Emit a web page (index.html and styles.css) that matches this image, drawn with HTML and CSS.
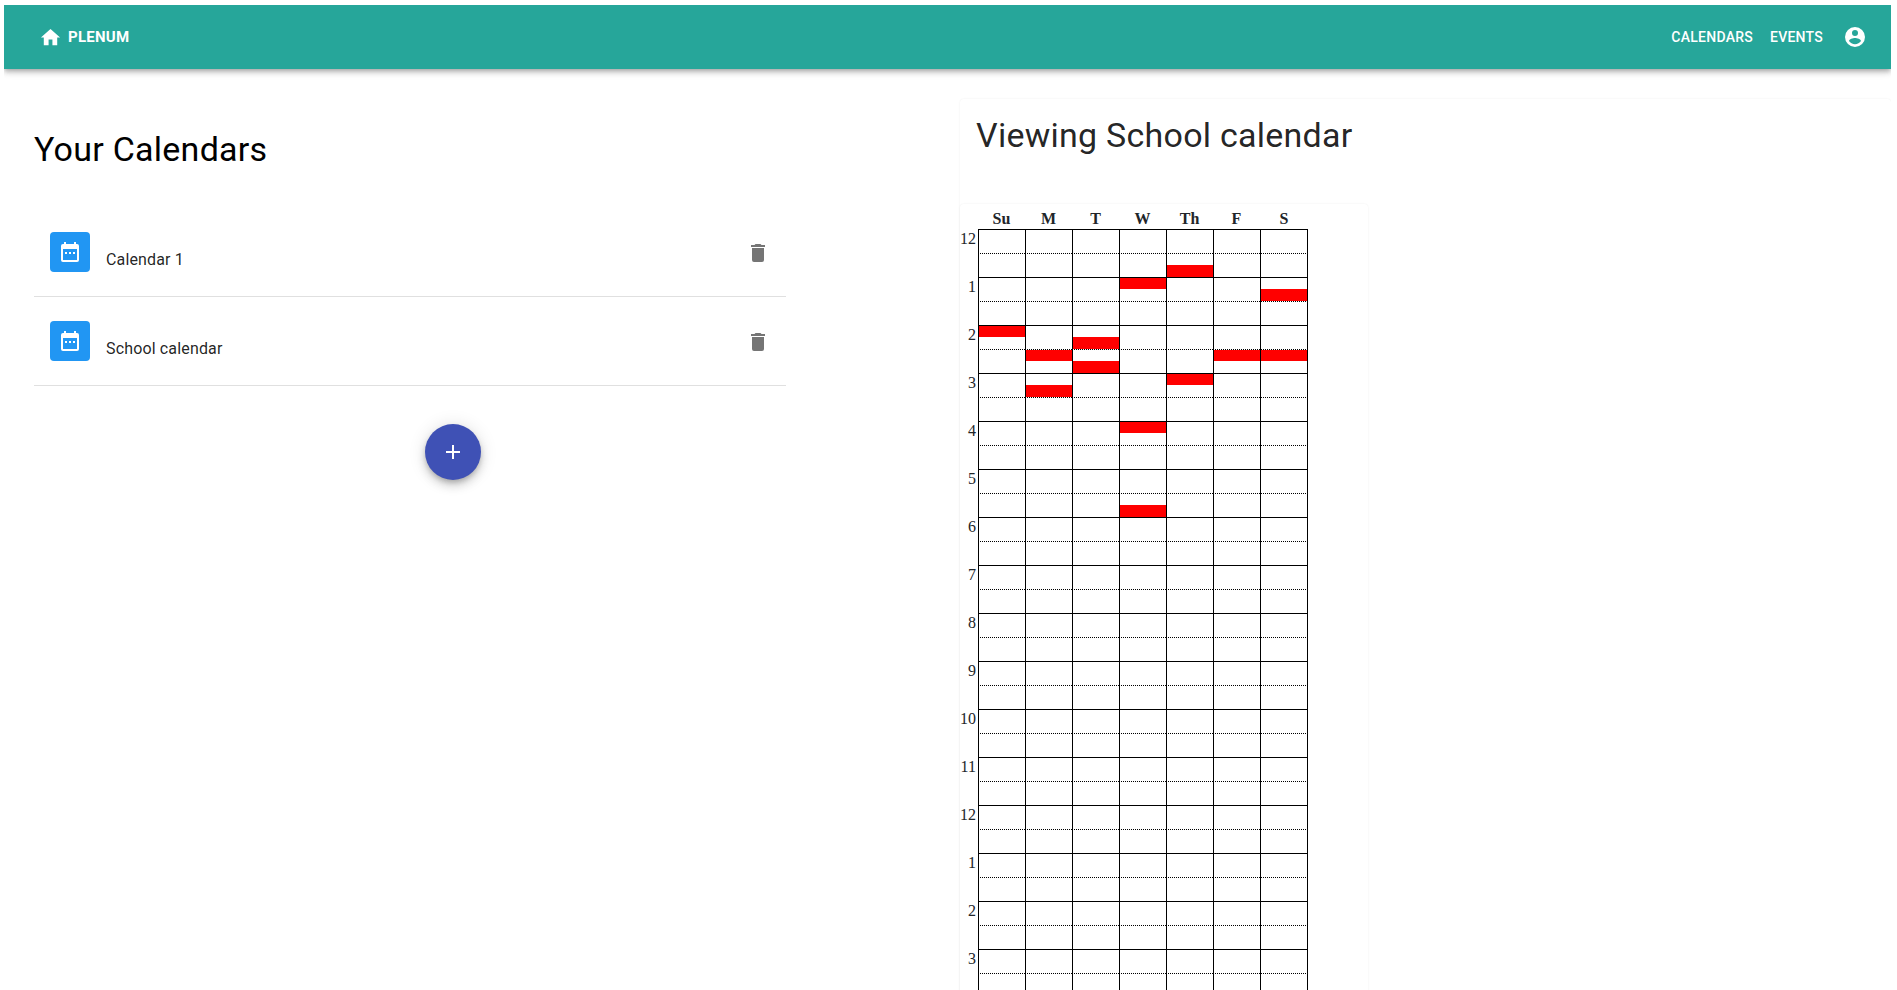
FILE: index.html
```html
<!DOCTYPE html>
<html lang="en">
<head>
    <meta charset="UTF-8">
    <meta name="viewport" content="width=device-width, initial-scale=1.0">
    <title>Plenum</title>
    <link rel="stylesheet" href="styles.css">
</head>
<body>
    <header class="navbar">
        <a class="brand" href="#">
            <svg class="icon" viewBox="0 0 24 24"><path d="M10,20V14H14V20H19V12H22L12,3L2,12H5V20H10Z"/></svg>
            <span>Plenum</span>
        </a>
        <nav class="nav-links">
            <a href="#">Calendars</a>
            <a href="#">Events</a>
            <svg class="icon account" viewBox="0 0 24 24"><path d="M12,19.2C9.5,19.2 7.29,17.92 6,16C6.03,14 10,12.9 12,12.9C14,12.9 17.97,14 18,16C16.71,17.92 14.5,19.2 12,19.2M12,5A3,3 0 0,1 15,8A3,3 0 0,1 12,11A3,3 0 0,1 9,8A3,3 0 0,1 12,5M12,2A10,10 0 0,0 2,12A10,10 0 0,0 12,22A10,10 0 0,0 22,12A10,10 0 0,0 12,2Z"/></svg>
        </nav>
    </header>

    <main class="content">
        <section class="calendars">
            <h1>Your Calendars</h1>
            <ul class="calendar-list">
                <li>
                    <span class="avatar">
                        <svg class="icon" viewBox="0 0 24 24"><path d="M19,4H18V2H16V4H8V2H6V4H5A2,2 0 0,0 3,6V20A2,2 0 0,0 5,22H19A2,2 0 0,0 21,20V6A2,2 0 0,0 19,4M19,20H5V9H19V20M7,12H9V14H7V12M11,12H13V14H11V12M15,12H17V14H15V12Z"/></svg>
                    </span>
                    <span class="calendar-name">Calendar 1</span>
                    <svg class="icon trash" viewBox="0 0 24 24"><path d="M19,4H15.5L14.5,3H9.5L8.5,4H5V6H19V4M6,19A2,2 0 0,0 8,21H16A2,2 0 0,0 18,19V7H6V19Z"/></svg>
                </li>
                <li>
                    <span class="avatar">
                        <svg class="icon" viewBox="0 0 24 24"><path d="M19,4H18V2H16V4H8V2H6V4H5A2,2 0 0,0 3,6V20A2,2 0 0,0 5,22H19A2,2 0 0,0 21,20V6A2,2 0 0,0 19,4M19,20H5V9H19V20M7,12H9V14H7V12M11,12H13V14H11V12M15,12H17V14H15V12Z"/></svg>
                    </span>
                    <span class="calendar-name">School calendar</span>
                    <svg class="icon trash" viewBox="0 0 24 24"><path d="M19,4H15.5L14.5,3H9.5L8.5,4H5V6H19V4M6,19A2,2 0 0,0 8,21H16A2,2 0 0,0 18,19V7H6V19Z"/></svg>
                </li>
            </ul>
            <button class="fab" type="button">
                <svg class="icon" viewBox="0 0 24 24"><path d="M19,13H13V19H11V13H5V11H11V5H13V11H19V13Z"/></svg>
            </button>
        </section>

        <section class="viewer">
            <h2>Viewing School calendar</h2>
            <div class="schedule-card">
                <table class="schedule">
                    <thead>
                        <tr><th class="hour"></th><th>Su</th><th>M</th><th>T</th><th>W</th><th>Th</th><th>F</th><th>S</th></tr>
                    </thead>
                    <tbody>
                        <tr><th class="hour" rowspan="2">12</th><td></td><td></td><td></td><td></td><td></td><td></td><td></td></tr>
                        <tr class="half"><td></td><td></td><td></td><td></td><td><div class="busy-late"></div></td><td></td><td></td></tr>
                        <tr><th class="hour" rowspan="2">1</th><td></td><td></td><td></td><td><div class="busy-early"></div></td><td></td><td></td><td><div class="busy-late"></div></td></tr>
                        <tr class="half"><td></td><td></td><td></td><td></td><td></td><td></td><td></td></tr>
                        <tr><th class="hour" rowspan="2">2</th><td><div class="busy-early"></div></td><td></td><td><div class="busy-late"></div></td><td></td><td></td><td></td><td></td></tr>
                        <tr class="half"><td></td><td><div class="busy-early"></div></td><td><div class="busy-late"></div></td><td></td><td></td><td><div class="busy-early"></div></td><td><div class="busy-early"></div></td></tr>
                        <tr><th class="hour" rowspan="2">3</th><td></td><td><div class="busy-late"></div></td><td></td><td></td><td><div class="busy-early"></div></td><td></td><td></td></tr>
                        <tr class="half"><td></td><td></td><td></td><td></td><td></td><td></td><td></td></tr>
                        <tr><th class="hour" rowspan="2">4</th><td></td><td></td><td></td><td><div class="busy-early"></div></td><td></td><td></td><td></td></tr>
                        <tr class="half"><td></td><td></td><td></td><td></td><td></td><td></td><td></td></tr>
                        <tr><th class="hour" rowspan="2">5</th><td></td><td></td><td></td><td></td><td></td><td></td><td></td></tr>
                        <tr class="half"><td></td><td></td><td></td><td><div class="busy-late"></div></td><td></td><td></td><td></td></tr>
                        <tr><th class="hour" rowspan="2">6</th><td></td><td></td><td></td><td></td><td></td><td></td><td></td></tr>
                        <tr class="half"><td></td><td></td><td></td><td></td><td></td><td></td><td></td></tr>
                        <tr><th class="hour" rowspan="2">7</th><td></td><td></td><td></td><td></td><td></td><td></td><td></td></tr>
                        <tr class="half"><td></td><td></td><td></td><td></td><td></td><td></td><td></td></tr>
                        <tr><th class="hour" rowspan="2">8</th><td></td><td></td><td></td><td></td><td></td><td></td><td></td></tr>
                        <tr class="half"><td></td><td></td><td></td><td></td><td></td><td></td><td></td></tr>
                        <tr><th class="hour" rowspan="2">9</th><td></td><td></td><td></td><td></td><td></td><td></td><td></td></tr>
                        <tr class="half"><td></td><td></td><td></td><td></td><td></td><td></td><td></td></tr>
                        <tr><th class="hour" rowspan="2">10</th><td></td><td></td><td></td><td></td><td></td><td></td><td></td></tr>
                        <tr class="half"><td></td><td></td><td></td><td></td><td></td><td></td><td></td></tr>
                        <tr><th class="hour" rowspan="2">11</th><td></td><td></td><td></td><td></td><td></td><td></td><td></td></tr>
                        <tr class="half"><td></td><td></td><td></td><td></td><td></td><td></td><td></td></tr>
                        <tr><th class="hour" rowspan="2">12</th><td></td><td></td><td></td><td></td><td></td><td></td><td></td></tr>
                        <tr class="half"><td></td><td></td><td></td><td></td><td></td><td></td><td></td></tr>
                        <tr><th class="hour" rowspan="2">1</th><td></td><td></td><td></td><td></td><td></td><td></td><td></td></tr>
                        <tr class="half"><td></td><td></td><td></td><td></td><td></td><td></td><td></td></tr>
                        <tr><th class="hour" rowspan="2">2</th><td></td><td></td><td></td><td></td><td></td><td></td><td></td></tr>
                        <tr class="half"><td></td><td></td><td></td><td></td><td></td><td></td><td></td></tr>
                        <tr><th class="hour" rowspan="2">3</th><td></td><td></td><td></td><td></td><td></td><td></td><td></td></tr>
                        <tr class="half"><td></td><td></td><td></td><td></td><td></td><td></td><td></td></tr>
                    </tbody>
                </table>
            </div>
        </section>
    </main>
</body>
</html>
```

FILE: styles.css
```css
html {
    overflow: hidden;
}
body {
    font-family: 'Roboto', sans-serif;
    background-color: white;
    color: rgba(0, 0, 0, 0.87);
    margin: 5px 6px 0 4px;
}
.icon {
    display: block;
    width: 24px;
    height: 24px;
    fill: currentColor;
}

/* Верхняя панель */
.navbar {
    display: flex;
    justify-content: space-between;
    align-items: center;
    height: 64px;
    padding: 0 24px 0 35px;
    background-color: #26a69a;
    color: white;
    box-shadow: 0 2px 4px -1px rgba(0, 0, 0, 0.2), 0 4px 5px 0 rgba(0, 0, 0, 0.14), 0 1px 10px 0 rgba(0, 0, 0, 0.12);
}
.navbar a {
    color: white;
    text-decoration: none;
    text-transform: uppercase;
    font-size: 14px;
    font-weight: 500;
    letter-spacing: 0.25px;
}
.brand {
    display: flex;
    align-items: center;
    gap: 6px;
}
.brand .icon {
    width: 23px;
    height: 23px;
}
.brand span {
    font-size: 15px;
    font-weight: 700;
}
.nav-links {
    display: flex;
    align-items: center;
    gap: 17px;
}
.account {
    margin-left: 3px;
}

.content {
    display: flex;
    align-items: flex-start;
}

/* Левая колонка */
.calendars {
    width: 926px;
    padding-left: 30px;
    flex-shrink: 0;
}
h1 {
    margin: 0;
    padding-top: 58px;
    font-size: 34px;
    font-weight: 400;
    letter-spacing: 0.25px;
    line-height: 44px;
    color: black;
}
.calendar-list {
    list-style: none;
    width: 752px;
    margin: 0;
    padding: 37px 0 0;
}
.calendar-list li {
    display: flex;
    align-items: flex-start;
    height: 64px;
    padding: 24px 16px 0;
    border-bottom: 1px solid rgba(0, 0, 0, 0.12);
}
.avatar {
    display: flex;
    align-items: center;
    justify-content: center;
    width: 40px;
    height: 40px;
    border-radius: 4px;
    background-color: #2196f3;
    color: white;
}
.calendar-name {
    flex: 1;
    margin-left: 16px;
    margin-top: 17px;
    font-size: 16px;
    letter-spacing: 0.15px;
    line-height: 22px;
}
.trash {
    margin-top: 9px;
    color: #757575;
}
.fab {
    display: flex;
    align-items: center;
    justify-content: center;
    width: 56px;
    height: 56px;
    margin: 38px 0 0 391px;
    padding: 0;
    border: none;
    border-radius: 50%;
    background-color: #3f51b5;
    color: white;
    box-shadow: 0 3px 5px -1px rgba(0, 0, 0, 0.2), 0 6px 10px 0 rgba(0, 0, 0, 0.14), 0 1px 18px 0 rgba(0, 0, 0, 0.12);
}

/* Правая колонка */
.viewer {
    flex: 1;
    margin-top: 30px;
    border-radius: 4px;
    box-shadow: 0 0 2px rgba(0, 0, 0, 0.08);
}
h2 {
    margin: 0;
    padding: 14px 16px 0;
    height: 91px;
    font-size: 34px;
    font-weight: 400;
    letter-spacing: 0.25px;
    line-height: 44px;
}
.schedule-card {
    width: 408px;
    border-radius: 4px;
    box-shadow: 0 0 2px rgba(0, 0, 0, 0.08);
}
.schedule {
    border-collapse: separate;
    border-spacing: 0;
    font-family: 'Liberation Serif', serif;
    font-size: 16px;
    color: #212529;
}
.schedule thead th {
    width: 47px;
    height: 24px;
    padding: 0 0 1px;
    font-weight: 700;
    vertical-align: bottom;
    line-height: 18px;
    text-align: center;
}
.schedule thead th.hour {
    width: 16px;
    padding: 0 2px 0 0;
}
.schedule tbody th.hour {
    width: 16px;
    padding: 1px 2px 0 0;
    font-weight: 400;
    text-align: right;
    vertical-align: top;
    line-height: 18px;
}
.schedule td {
    width: 46px;
    height: 23px;
    padding: 0;
    border-top: 1px solid black;
    border-left: 1px solid black;
    vertical-align: top;
}
.schedule td:last-child {
    border-right: 1px solid black;
}
.schedule tr.half td {
    border-top: 1px dotted black;
}
.busy-early {
    height: 11px;
    background-color: red;
}
.busy-late {
    height: 12px;
    margin-top: 11px;
    background-color: red;
}
```
